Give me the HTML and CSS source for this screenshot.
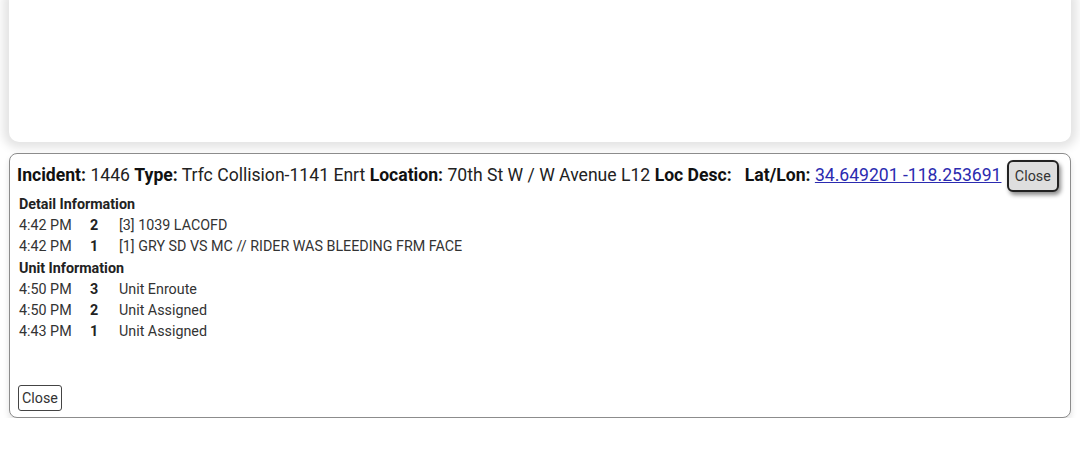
FILE: index.html
```html
<!DOCTYPE html>
<html>
<head>
<meta charset="utf-8">
<link rel="stylesheet" href="styles.css">
</head>
<body>
<div class="top-card"></div>
<div class="panel">
  <div class="header">
    <span class="lbl">Incident:</span> 1446 <span class="lbl">Type:</span> Trfc Collision-1141 Enrt <span class="lbl">Location:</span> 70th St W / W Avenue L12 <span class="lbl">Loc Desc:</span> &nbsp; <span class="lbl">Lat/Lon:</span> <a class="link" href="#">34.649201 -118.253691</a> <button class="close-top">Close</button>
  </div>
  <div class="section">Detail Information</div>
  <div class="row"><span class="t">4:42 PM</span><span class="n">2</span><span class="d">[3] 1039 LACOFD</span></div>
  <div class="row"><span class="t">4:42 PM</span><span class="n">1</span><span class="d">[1] GRY SD VS MC // RIDER WAS BLEEDING FRM FACE</span></div>
  <div class="section">Unit Information</div>
  <div class="row"><span class="t">4:50 PM</span><span class="n">3</span><span class="d">Unit Enroute</span></div>
  <div class="row"><span class="t">4:50 PM</span><span class="n">2</span><span class="d">Unit Assigned</span></div>
  <div class="row"><span class="t">4:43 PM</span><span class="n">1</span><span class="d">Unit Assigned</span></div>
  <div class="footer"><button class="close-bottom">Close</button></div>
</div>
</body>
</html>
```
FILE: styles.css
```css
html, body {
  margin: 0;
  padding: 0;
  background: #ffffff;
  font-family: Roboto, "Liberation Sans", Arial, sans-serif;
  color: #222;
}
.top-card {
  margin: 0 9px;
  height: 142px;
  background: #fff;
  border-radius: 0 0 10px 10px;
  box-shadow: 0 0 10px 6px rgba(0,0,0,0.11);
}
.panel {
  margin: 11px 9px 0 9px;
  height: 265px;
  border: 1.5px solid #8c8c8c;
  border-radius: 8px;
  background: #fff;
  box-shadow: 0 4px 6px rgba(0,0,0,0.12);
  padding: 0 0 0 7px;
  box-sizing: border-box;
  display: flex;
  flex-direction: column;
}
.header {
  font-size: 17.6px;
  line-height: 22px;
  padding-top: 6px;
  white-space: nowrap;
  color: #222;
}
.lbl { font-weight: 700; color: #111; }
.link { color: #2b2bb0; text-decoration: underline; }
.close-top {
  font-family: Roboto, "Liberation Sans", Arial, sans-serif;
  font-size: 14.3px;
  color: #333;
  background: #dedede;
  border: 2px solid #222;
  border-radius: 6px;
  height: 32px;
  padding: 0 6px;
  margin-left: 1px;
  box-shadow: 2px 3px 4px rgba(0,0,0,0.45);
  vertical-align: middle;
}
.section {
  font-size: 14.3px;
  font-weight: 700;
  line-height: 21.2px;
  padding-left: 2px;
  color: #222;
}
.header + .section { margin-top: 2px; }
.row {
  font-size: 14.3px;
  line-height: 21.2px;
  padding-left: 2px;
  display: flex;
  color: #333;
}
.t { width: 71px; }
.n { width: 29px; font-weight: 700; color: #222; }
.footer {
  margin-top: auto;
  padding-bottom: 6px;
}
.close-bottom {
  font-family: Roboto, "Liberation Sans", Arial, sans-serif;
  font-size: 14.3px;
  color: #333;
  background: #fff;
  border: 1.5px solid #444;
  border-radius: 3px;
  height: 26px;
  padding: 0 3px;
  margin-left: 1px;
}
```
